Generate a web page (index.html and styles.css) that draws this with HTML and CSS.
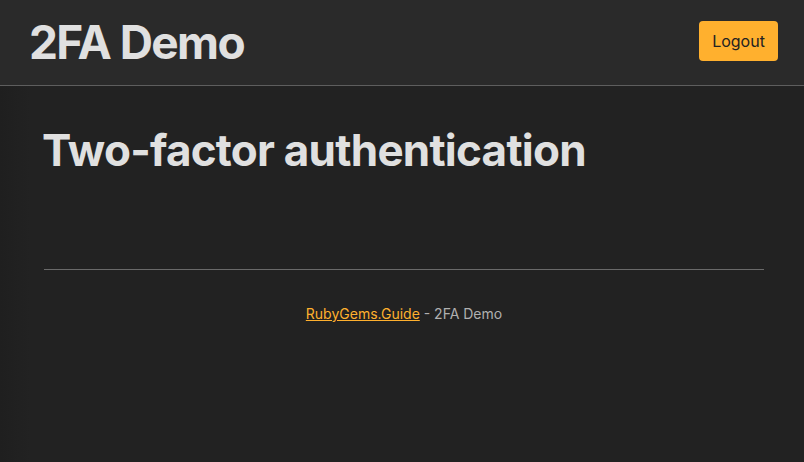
FILE: index.html
```html
<!DOCTYPE html>
<html>
<head>
<meta charset="utf-8">
<link rel="stylesheet" href="styles.css">
</head>
<body>
<header class="topbar">
  <div class="brand">2FA Demo</div>
  <button class="logout">Logout</button>
</header>
<main class="content">
  <h1 class="title">Two-factor authentication</h1>
  <hr class="rule">
  <footer class="foot"><a href="#" class="foot-link">RubyGems.Guide</a> - 2FA Demo</footer>
</main>
</body>
</html>
```
FILE: styles.css
```css
html, body {
  margin: 0;
  padding: 0;
  height: 100%;
}
body {
  background: linear-gradient(to right, #1f1f1f 0px, #212121 20px, #222222 30px, #222222 100%);
  font-family: Inter, "Noto Sans", sans-serif;
  color: #e0e0e0;
}
.topbar {
  height: 86px;
  box-sizing: border-box;
  border-bottom: 1px solid #5e5e5e;
  background: #2a2a2a;
  display: flex;
  align-items: center;
  justify-content: space-between;
  padding: 0 26px 0 29px;
}
.brand {
  font-size: 46px;
  font-weight: 700;
  color: #e0e0e0;
  letter-spacing: -1.6px;
  margin-top: -1px;
}
.logout {
  width: 79px;
  height: 40px;
  border: none;
  border-radius: 4px;
  background: #ffb02e;
  color: #222;
  font-family: Inter, sans-serif;
  font-size: 16px;
  padding: 0;
  margin-bottom: 3px;
}
.content {
  padding: 0 40px 0 44px;
}
.title {
  margin: 0 0 0 -2px;
  padding-top: 38px;
  font-size: 44px;
  font-weight: 700;
  color: #e0e0e0;
  letter-spacing: -0.75px;
  line-height: 1.2;
}
.rule {
  border: none;
  border-top: 1px solid #6a6a6a;
  margin: 92px 0 0 0;
}
.foot {
  text-align: center;
  font-size: 14px;
  color: #b0b0b0;
  padding-top: 35px;
}
.foot-link {
  color: #ffb02e;
}
```
